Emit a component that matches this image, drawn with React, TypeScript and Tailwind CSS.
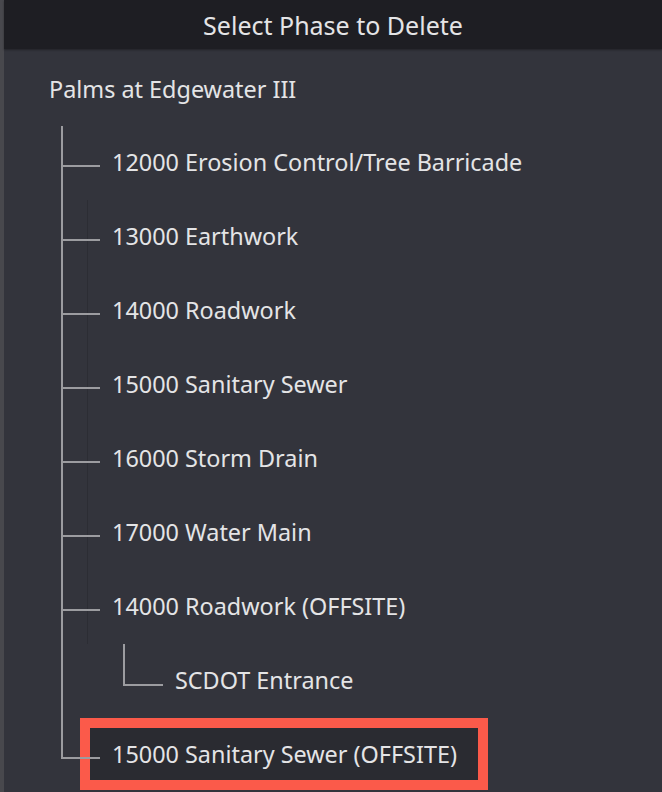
import React from "react";

type Phase = { id: string; label: string; child?: string };

const phases: Phase[] = [
  { id: "12000", label: "12000 Erosion Control/Tree Barricade" },
  { id: "13000", label: "13000 Earthwork" },
  { id: "14000", label: "14000 Roadwork" },
  { id: "15000", label: "15000 Sanitary Sewer" },
  { id: "16000", label: "16000 Storm Drain" },
  { id: "17000", label: "17000 Water Main" },
  { id: "14000-off", label: "14000 Roadwork (OFFSITE)", child: "SCDOT Entrance" },
];

function Connector({ last = false }: { last?: boolean }) {
  return (
    <div className="flex h-full w-[39px] shrink-0 flex-col">
      <div className="relative z-10 h-[41px] border-b-2 border-l-2 border-[#9c9ca0]" />
      <div className={last ? "flex-1" : "flex-1 border-l-2 border-[#9c9ca0]"} />
    </div>
  );
}

function Guide({ show }: { show: boolean }) {
  return <div className={show ? "ml-[-13px] h-full w-px shrink-0 bg-[#2c2d34]" : "ml-[-13px] h-full w-px shrink-0"} />;
}

export default function App() {
  return (
    <div
      className="flex h-[792px] w-[662px] overflow-hidden bg-[#33343c] text-[#e4e4e6]"
      style={{ fontFamily: '"Noto Sans", "Open Sans", sans-serif' }}
    >
      <div className="w-[4px] shrink-0 bg-[#48484d]" />
      <div className="flex flex-1 flex-col">
        <header className="flex h-[50px] items-center justify-center bg-[#1e1e23] pt-[3px] text-[25px] shadow-[0_1px_2px_rgba(0,0,0,0.35)]">
          Select Phase to Delete
        </header>
        <main className="pl-[45px]">
          <p className="mt-[24px] h-[32px] text-[23.4px] leading-[32px]">Palms at Edgewater III</p>
          <ul className="ml-[12px] mt-[21px]">
            {phases.map((p, i) => (
              <React.Fragment key={p.id}>
                <li className="flex h-[74px]">
                  <Connector />
                  <Guide show={i > 0} />
                  <span className="ml-[24px] self-center pb-[1px] text-[23.4px]">{p.label}</span>
                </li>
                {p.child && (
                  <li className="flex h-[74px]">
                    <div className="h-full w-[62px] shrink-0 border-l-2 border-[#9c9ca0]" />
                    <div className="h-[42px] w-[40px] shrink-0 border-b-2 border-l-2 border-[#9c9ca0]" />
                    <span className="ml-[12px] self-center pb-[1px] text-[23.4px]">{p.child}</span>
                  </li>
                )}
              </React.Fragment>
            ))}
            <li className="relative flex h-[74px]">
              <div className="absolute left-[19px] top-0 h-[72px] w-[408px] bg-[#2a2b31]" />
              <div className="relative flex h-full">
                <Connector last />
              </div>
              <span className="relative ml-[12px] self-center pb-[1px] text-[23.4px]">15000 Sanitary Sewer (OFFSITE)</span>
              <div className="pointer-events-none absolute left-[19px] top-0 h-[72px] w-[408px] border-[10px] border-[#fb5a4a]" />
            </li>
          </ul>
        </main>
      </div>
    </div>
  );
}
